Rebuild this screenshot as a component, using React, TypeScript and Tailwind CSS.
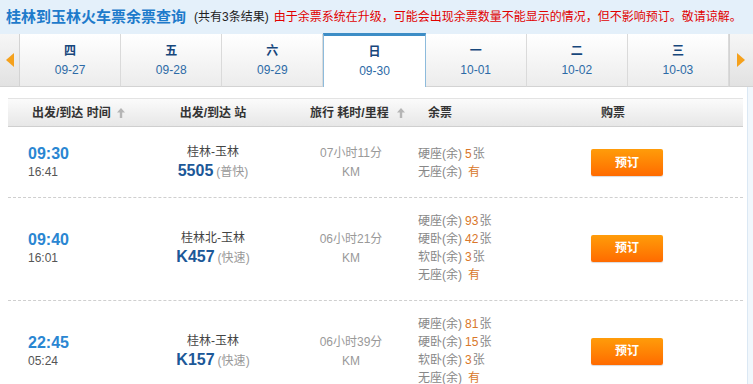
import React from "react"

interface Seat {
  name: string
  count: string
  unit?: string
}

interface Train {
  dep: string
  arr: string
  route: string
  code: string
  kind: string
  duration: string
  seats: Seat[]
}

const trains: Train[] = [
  {
    dep: "09:30",
    arr: "16:41",
    route: "桂林-玉林",
    code: "5505",
    kind: "普快",
    duration: "07小时11分",
    seats: [
      { name: "硬座", count: "5", unit: "张" },
      { name: "无座", count: "有" },
    ],
  },
  {
    dep: "09:40",
    arr: "16:01",
    route: "桂林北-玉林",
    code: "K457",
    kind: "快速",
    duration: "06小时21分",
    seats: [
      { name: "硬座", count: "93", unit: "张" },
      { name: "硬卧", count: "42", unit: "张" },
      { name: "软卧", count: "3", unit: "张" },
      { name: "无座", count: "有" },
    ],
  },
  {
    dep: "22:45",
    arr: "05:24",
    route: "桂林-玉林",
    code: "K157",
    kind: "快速",
    duration: "06小时39分",
    seats: [
      { name: "硬座", count: "81", unit: "张" },
      { name: "硬卧", count: "15", unit: "张" },
      { name: "软卧", count: "3", unit: "张" },
      { name: "无座", count: "有" },
    ],
  },
]

const days = [
  { day: "四", date: "09-27" },
  { day: "五", date: "09-28" },
  { day: "六", date: "09-29" },
  { day: "日", date: "09-30", active: true },
  { day: "一", date: "10-01" },
  { day: "二", date: "10-02" },
  { day: "三", date: "10-03" },
]

// little grey sort arrow in the table header
const SortArrow = () => (
  <svg width="8" height="10" viewBox="0 0 8 10" className="inline-block">
    <path d="M4 0 L8 4.5 L5.2 4.5 L5.2 10 L2.8 10 L2.8 4.5 L0 4.5 Z" fill="#b5b5b5" />
  </svg>
)

export default function App() {
  return (
    <div className="w-[753px] h-[384px] overflow-hidden bg-white text-[12px] leading-[18px] font-['Liberation_Sans','Noto_Sans_CJK_SC',sans-serif]">
      {/* title bar */}
      <div className="h-[33px] bg-[#e4f0fa] flex items-center pl-[6px] whitespace-nowrap">
        <span className="text-[15px] font-bold text-[#1e7bcb]">桂林到玉林火车票余票查询</span>
        <span className="ml-[8px] text-[#222]">(共有3条结果)</span>
        <span className="ml-[5px] text-[#e10000]">
          由于余票系统在升级，可能会出现余票数量不能显示的情况，但不影响预订。敬请谅解。
        </span>
      </div>

      {/* date tabs */}
      <div className="flex items-end h-[54px] bg-[#e4f0fa]">
        <div className="w-[20px] h-[53px] flex items-center justify-center bg-gradient-to-b from-[#f6f6f6] to-[#e2e2e2] border-r border-b border-[#d3d3d3]">
          <svg width="8" height="14" viewBox="0 0 8 14">
            <path d="M8 0 L0 7 L8 14 Z" fill="#f5a11c" />
          </svg>
        </div>
        {days.map((d) =>
          d.active ? (
            <div
              key={d.date}
              className="flex-1 h-[54px] flex flex-col items-center bg-white border-t-[3px] border-t-[#3d8dc6] border-x border-x-[#8dbbdc] pt-[6px]"
            >
              <span className="font-bold text-[#17477c] leading-[18px] mt-[1px]">{d.day}</span>
              <span className="text-[#2c6aa6] leading-[18px] mt-[1px]">{d.date}</span>
            </div>
          ) : (
            <div
              key={d.date}
              className="flex-1 h-[53px] flex flex-col items-center bg-gradient-to-b from-white to-[#ececec] border-r border-r-[#dadada] border-b border-b-[#d3d3d3] pt-[8px]"
            >
              <span className="font-bold text-[#17477c] leading-[18px]">{d.day}</span>
              <span className="text-[#2c6aa6] leading-[18px] mt-[1px]">{d.date}</span>
            </div>
          )
        )}
        <div className="w-[24px] h-[53px] flex items-center justify-center bg-gradient-to-b from-[#f6f6f6] to-[#e2e2e2] border-l border-b border-[#d3d3d3]">
          <svg width="8" height="14" viewBox="0 0 8 14">
            <path d="M0 0 L8 7 L0 14 Z" fill="#f5a11c" />
          </svg>
        </div>
      </div>

      {/* results */}
      <div className="flex">
        <div className="w-[747px] pt-[11px] pl-[8px]">
          <div className="w-[735px]">
            <div className="flex items-center h-[29px] bg-gradient-to-b from-[#fbfbfb] to-[#e7e7e7] border-y border-t-[#e3e3e3] border-b-[#cfcfcf] font-bold text-[#333]">
              <div className="w-[150px] pl-[24px] flex items-center">
                出发/到达 时间<span className="ml-[6px] flex"><SortArrow /></span>
              </div>
              <div className="w-[110px] text-center">出发/到达 站</div>
              <div className="w-[150px] pl-[42px] flex items-center">
                旅行 耗时/里程<span className="ml-[8px] flex"><SortArrow /></span>
              </div>
              <div className="w-[173px] pl-[10px]">余票</div>
              <div className="flex-1 pl-[10px]">购票</div>
            </div>

            {trains.map((t, i) => (
              <div
                key={t.code}
                className={`flex items-center border-b border-dashed border-[#cfcfcf] ${
                  i === 0 ? "pt-[16px] pb-[15px]" : "pt-[14px] pb-[16px]"
                }`}
              >
                <div className="w-[150px] pl-[20px] flex flex-col">
                  <span className="text-[16px] font-bold text-[#2a86d2] leading-[19px]">{t.dep}</span>
                  <span className="text-[#555] leading-[18px]">{t.arr}</span>
                </div>
                <div className="w-[110px] flex flex-col items-center">
                  <span className="text-[#444] leading-[18px]">{t.route}</span>
                  <span className="leading-[19px] whitespace-nowrap">
                    <span className="text-[16px] font-bold text-[#1c5898]">{t.code}</span>
                    <span className="text-[#999] ml-[3px]">({t.kind})</span>
                  </span>
                </div>
                <div className="w-[150px] pl-[16px] flex flex-col items-center text-[#999]">
                  <span className="leading-[19px]">{t.duration}</span>
                  <span className="leading-[18px]">KM</span>
                </div>
                <div className="w-[173px] flex flex-col text-[#888]">
                  {t.seats.map((s) => (
                    <span key={s.name} className="leading-[18px] whitespace-nowrap">
                      {s.name}(余)
                      {s.unit ? (
                        <>
                          <span className="ml-[3px] text-[#d9772a]">{s.count}</span>
                          <span className="ml-[1px]">{s.unit}</span>
                        </>
                      ) : (
                        <span className="ml-[6px] text-[#d9772a]">{s.count}</span>
                      )}
                    </span>
                  ))}
                </div>
                <div className="flex-1">
                  <button className="w-[72px] h-[27px] rounded-[2px] bg-gradient-to-b from-[#ff9c0a] to-[#ff6a00] text-white font-bold shadow-[0_1px_1px_rgba(0,0,0,0.15)]">
                    预订
                  </button>
                </div>
              </div>
            ))}
          </div>
        </div>
        <div className="flex-1 bg-[#f1f7fc] border-l border-[#dbe8f4]" />
      </div>
    </div>
  )
}
